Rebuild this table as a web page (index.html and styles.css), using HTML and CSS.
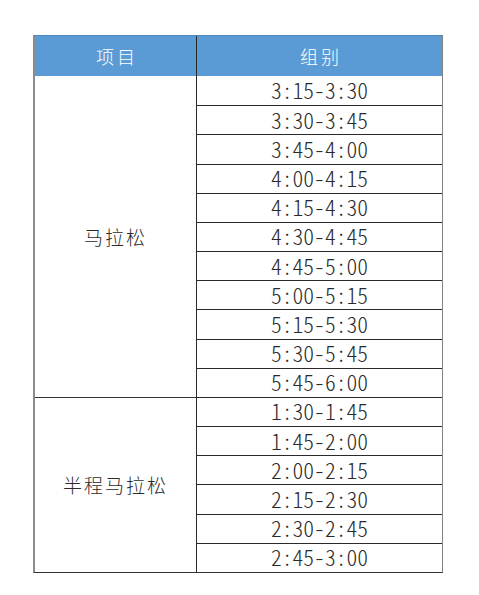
FILE: index.html
```html
<!DOCTYPE html>
<html lang="zh">
<head>
<meta charset="utf-8">
<link rel="stylesheet" href="styles.css">
</head>
<body>
<div class="page">
  <div class="grid">
    <div class="head head-left">项目</div>
    <div class="head head-right">组别</div>
    <div class="label group-a">马拉松</div>
    <div class="time first">3:15-3:30</div>
    <div class="time">3:30-3:45</div>
    <div class="time">3:45-4:00</div>
    <div class="time">4:00-4:15</div>
    <div class="time">4:15-4:30</div>
    <div class="time">4:30-4:45</div>
    <div class="time">4:45-5:00</div>
    <div class="time">5:00-5:15</div>
    <div class="time">5:15-5:30</div>
    <div class="time">5:30-5:45</div>
    <div class="time">5:45-6:00</div>
    <div class="label group-b">半程马拉松</div>
    <div class="time">1:30-1:45</div>
    <div class="time">1:45-2:00</div>
    <div class="time">2:00-2:15</div>
    <div class="time">2:15-2:30</div>
    <div class="time">2:30-2:45</div>
    <div class="time">2:45-3:00</div>
  </div>
</div>
</body>
</html>
```

FILE: styles.css
```css
* { box-sizing: border-box; }
html, body { margin: 0; padding: 0; background: #ffffff; }
.page {
  width: 479px;
  height: 595px;
  padding: 35px 0 0 33px;
}
.grid {
  display: grid;
  width: 410px;
  grid-template-columns: 161px 246px;
  grid-template-rows: 40px repeat(17, 29.18px);
  border-left: 2px solid #8c8c8c;
  border-right: 1px solid #808080;
  border-bottom: 1px solid #333333;
  border-top: 1px solid #4f86bd;
}
.head {
  background: #5b9bd5;
  color: #ffffff;
  font-family: "Noto Sans CJK SC", sans-serif;
  font-size: 18px;
  font-weight: 300;
  letter-spacing: 3px;
  display: flex;
  align-items: center;
  justify-content: center;
  padding-left: 3px;
}
.head-right { border-left: 1px solid #2a2a2a; }
.label {
  font-family: "Noto Sans CJK SC", sans-serif;
  font-size: 19px;
  font-weight: 300;
  letter-spacing: 2px;
  color: #2a2a2a;
  display: flex;
  align-items: center;
  justify-content: center;
  grid-column: 1;
}
.group-a { grid-row: 2 / span 11; }
.group-b { grid-row: 13 / span 6; border-top: 1px solid #333333; }
.time {
  grid-column: 2;
  border-left: 1px solid #2a2a2a;
  border-top: 1px solid #2a2a2a;
  font-family: "Noto Sans CJK SC", sans-serif;
  font-feature-settings: "hwid";
  font-size: 21.6px;
  font-weight: 300;
  color: #2a2a2a;
  display: flex;
  align-items: center;
  justify-content: center;
  padding-bottom: 2px;
}
.time.first { border-top: none; }
```
